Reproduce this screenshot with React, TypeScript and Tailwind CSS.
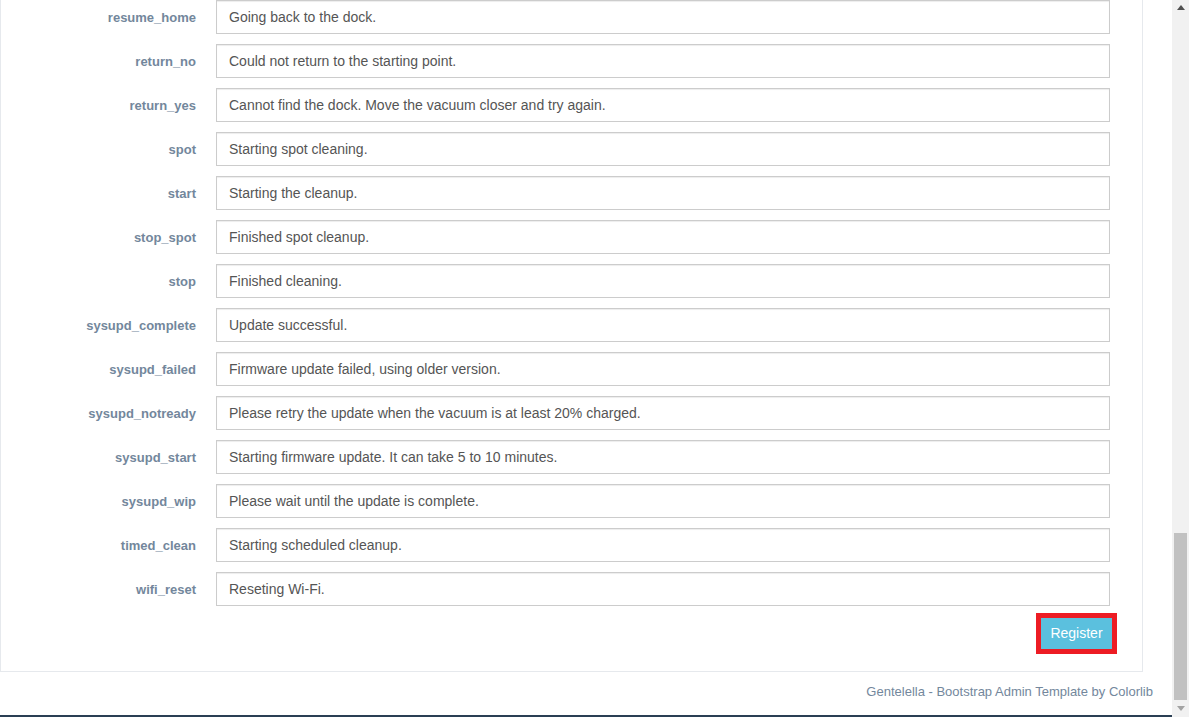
import React from "react";

const rows: [string, string][] = [
  ["resume_home", "Going back to the dock."],
  ["return_no", "Could not return to the starting point."],
  ["return_yes", "Cannot find the dock. Move the vacuum closer and try again."],
  ["spot", "Starting spot cleaning."],
  ["start", "Starting the cleanup."],
  ["stop_spot", "Finished spot cleanup."],
  ["stop", "Finished cleaning."],
  ["sysupd_complete", "Update successful."],
  ["sysupd_failed", "Firmware update failed, using older version."],
  ["sysupd_notready", "Please retry the update when the vacuum is at least 20% charged."],
  ["sysupd_start", "Starting firmware update. It can take 5 to 10 minutes."],
  ["sysupd_wip", "Please wait until the update is complete."],
  ["timed_clean", "Starting scheduled cleanup."],
  ["wifi_reset", "Reseting Wi-Fi."],
];

export default function App() {
  return (
    <div className="flex h-[717px] w-[1189px] overflow-hidden bg-white font-['Liberation_Sans',Arial,sans-serif]">
      <div className="flex w-[1172px] flex-col">
        <div className="w-[1143px] border-x border-b border-[#E6E9ED] bg-white">
          <div className="flex flex-col gap-[10px]">
            {rows.map(([k, v]) => (
              <div key={k} className="flex items-center gap-[20px]">
                <div className="w-[195px] pt-[2px] text-right text-[13px] font-bold text-[#73879C]">{k}</div>
                <div className="flex h-[34px] w-[894px] items-center border border-[#CCCCCC] pl-[12px] text-[14px] text-[#555555] shadow-[inset_0_1px_1px_rgba(0,0,0,0.075)]">
                  {v}
                </div>
              </div>
            ))}
          </div>
          <div className="mt-[7px] flex justify-end pb-[17px] pr-[25px]">
            <div className="border-[5px] border-[#ED1C24]">
              <div className="flex h-[31px] w-[71px] items-center justify-center bg-[#5BC0DE] text-[14px] text-white">
                Register
              </div>
            </div>
          </div>
        </div>
        <div className="flex flex-1 items-center justify-end pb-[3px] pr-[19px] text-[13px] text-[#73879C]">
          Gentelella - Bootstrap Admin Template by Colorlib
        </div>
        <div className="h-[2px] bg-[#2A3F54]" />
      </div>
      <div className="flex w-[17px] flex-col bg-[#F1F1F1]">
        <div className="flex h-[17px] justify-center pt-[5px]">
          <svg width="8" height="5" viewBox="0 0 8 5">
            <path d="M0 5 L4 0 L8 5 Z" fill="#505050" />
          </svg>
        </div>
        <div className="flex-1 px-[2px]">
          <div className="mt-[516px] h-[167px] bg-[#C1C1C1]" />
        </div>
        <div className="flex h-[17px] justify-center pt-[6px]">
          <svg width="8" height="5" viewBox="0 0 8 5">
            <path d="M0 0 L8 0 L4 5 Z" fill="#A3A3A3" />
          </svg>
        </div>
      </div>
    </div>
  );
}
